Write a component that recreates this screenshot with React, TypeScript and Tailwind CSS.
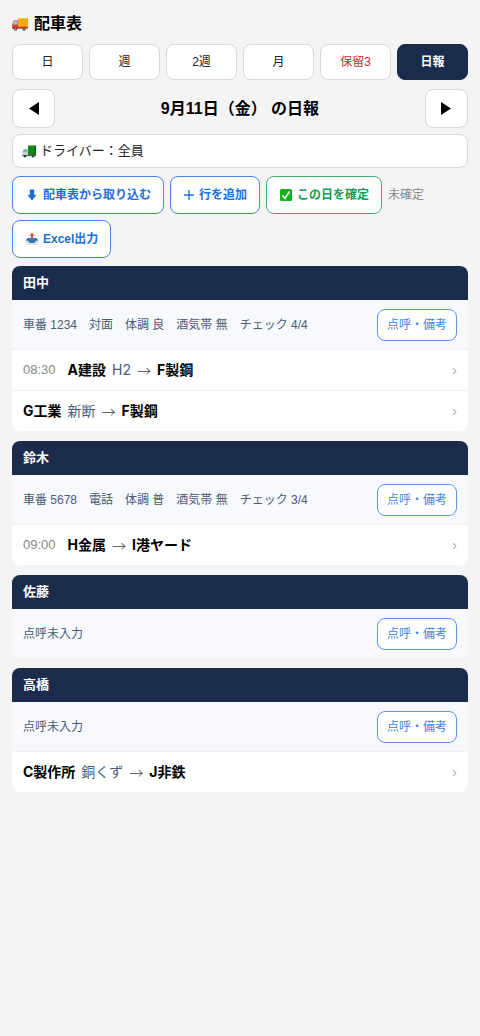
import type { ReactNode } from "react";

type Trip = { time?: string; from: string; item?: string; to: string };

type Driver = { name: string; rollCall: string; trips: Trip[] };

const tabs = [
  { label: "日", style: "border-[#d9d9d9] bg-white text-[#222]" },
  { label: "週", style: "border-[#d9d9d9] bg-white text-[#222]" },
  { label: "2週", style: "border-[#d9d9d9] bg-white text-[#222]" },
  { label: "月", style: "border-[#d9d9d9] bg-white text-[#222]" },
  { label: "保留3", style: "border-[#d9d9d9] bg-white text-[#c62f2f]" },
  { label: "日報", style: "border-[#1a2b4b] bg-[#1a2b4b] text-white font-bold" },
];

const drivers: Driver[] = [
  {
    name: "田中",
    rollCall: "車番 1234　対面　体調 良　酒気帯 無　チェック 4/4",
    trips: [
      { time: "08:30", from: "A建設", item: "H2", to: "F製鋼" },
      { from: "G工業", item: "新断", to: "F製鋼" },
    ],
  },
  {
    name: "鈴木",
    rollCall: "車番 5678　電話　体調 普　酒気帯 無　チェック 3/4",
    trips: [{ time: "09:00", from: "H金属", to: "I港ヤード" }],
  },
  { name: "佐藤", rollCall: "点呼未入力", trips: [] },
  {
    name: "高橋",
    rollCall: "点呼未入力",
    trips: [{ from: "C製作所", item: "銅くず", to: "J非鉄" }],
  },
];

export default function App() {
  return (
    <div className="min-h-screen bg-[#f4f4f4] px-3 pt-3 pb-6 text-black font-['Liberation_Sans','Noto_Sans_CJK_JP',sans-serif]">
      <h1 className="flex items-center gap-1.5 text-base leading-6 font-bold">
        <DeliveryTruck />
        配車表
      </h1>

      <nav className="mt-2 grid grid-cols-6 gap-1.5">
        {tabs.map((tab) => (
          <button key={tab.label} type="button" className={`h-9 rounded-lg border text-xs ${tab.style}`}>
            {tab.label}
          </button>
        ))}
      </nav>

      <div className="mt-[9px] flex items-center justify-between">
        <DayButton label="前の日">
          <path d="M11 0v13L1 6.500z" />
        </DayButton>
        <h2 className="text-base font-bold">9月11日（金） の日報</h2>
        <DayButton label="次の日">
          <path d="M1 0v13l10-6.500z" />
        </DayButton>
      </div>

      <div className="mt-1.5 flex h-[34px] items-center rounded-lg border border-[#d9d9d9] bg-white pl-[9px]">
        <GreenTruck />
        <select
          aria-label="ドライバー"
          className="h-full min-w-0 flex-1 appearance-none bg-transparent pl-1 text-[13px] text-[#222] outline-none"
        >
          <option>ドライバー：全員</option>
        </select>
      </div>

      <div className="mt-2 flex flex-wrap items-center gap-1.5">
        <ActionButton tone="border-[#4387e3] text-[#1d6fdc]">
          <svg viewBox="0 0 14 14" className="w-3.5 h-3.5" fill="currentColor">
            <path d="M4.800 1.500h4.400v5.500h2.300L7 12.500 2.500 7h2.300z" />
          </svg>
          配車表から取り込む
        </ActionButton>
        <ActionButton tone="border-[#4387e3] text-[#1d6fdc]">
          <svg viewBox="0 0 12 14" className="w-3 h-3.5" stroke="currentColor" strokeWidth="1.300">
            <path d="M6 2v10M1 7h10" />
          </svg>
          行を追加
        </ActionButton>
        <ActionButton tone="border-[#3fae74] text-[#169a55]">
          <svg viewBox="0 0 14 14" className="w-3.5 h-3.5">
            <rect x="1" y="1" width="12" height="12" rx="1.500" fill="#10b21c" />
            <path d="M3.500 7.500l2.500 3 4.500-7" fill="none" stroke="#fff" strokeWidth="1.500" />
          </svg>
          この日を確定
        </ActionButton>
        <span className="text-xs text-[#888]">未確定</span>
        <ActionButton tone="border-[#4387e3] text-[#1d6fdc]">
          <OutboxTray />
          Excel出力
        </ActionButton>
      </div>

      <main className="mt-2 space-y-2.5">
        {drivers.map((driver) => (
          <DriverCard key={driver.name} driver={driver} />
        ))}
      </main>
    </div>
  );
}

function DriverCard({ driver }: { driver: Driver }) {
  return (
    <section className="overflow-hidden rounded-lg bg-white">
      <h3 className="flex h-[34px] items-center bg-[#1a2b4b] px-[11px] text-[13px] font-bold text-white">
        {driver.name}
      </h3>
      <div className="flex h-[49px] items-center justify-between bg-[#f7f9fd] px-[11px]">
        <p className="text-xs text-[#4b5a75]">{driver.rollCall}</p>
        <button
          type="button"
          className="h-8 shrink-0 rounded-lg border border-[#5a96ea] bg-white px-[9px] text-xs text-[#4387e3]"
        >
          点呼・備考
        </button>
      </div>
      {driver.trips.map((trip) => (
        <TripRow key={trip.from} trip={trip} />
      ))}
    </section>
  );
}

function TripRow({ trip }: { trip: Trip }) {
  return (
    <a href="#" className="flex h-[41px] items-center border-t border-[#f0f0f0] px-[11px] text-sm">
      {trip.time && <time className="mr-3 text-[13px] text-[#888]">{trip.time}</time>}
      <span className="flex gap-1.5 font-['Inter','Noto_Sans_CJK_JP',sans-serif]">
        <b>{trip.from}</b>
        {trip.item && <span className="text-[#4b5a75]">{trip.item}</span>}
        <span className="text-[#444] font-['Noto_Sans_CJK_JP',sans-serif] font-light">→</span>
        <b>{trip.to}</b>
      </span>
      <span className="ml-auto text-[#aaa]">›</span>
    </a>
  );
}

function DayButton({ label, children }: { label: string; children: ReactNode }) {
  return (
    <button
      type="button"
      aria-label={label}
      className="flex h-[39px] w-[43px] items-center justify-center rounded-lg border border-[#d9d9d9] bg-white"
    >
      <svg viewBox="0 0 12 13" className="w-3 h-[13px]">
        {children}
      </svg>
    </button>
  );
}

function ActionButton({ tone, children }: { tone: string; children: ReactNode }) {
  return (
    <button
      type="button"
      className={`flex h-[38px] items-center gap-1 rounded-lg border bg-white px-3 text-xs font-bold ${tone}`}
    >
      {children}
    </button>
  );
}

function DeliveryTruck() {
  return (
    <svg viewBox="0 0 16 16" className="w-4 h-4">
      <path d="M6 2h10v9.500H6z" fill="#f5a80f" />
      <path d="M6 2h10v1H6z" fill="#fbc33b" />
      <path d="M1.800 4.500H6v8H.2V8.500z" fill="#d9412b" />
      <path d="M2.200 5.200h3.300V8.500H1z" fill="#8fd0e8" />
      <path d="M.2 10.800H16v1.800H.2z" fill="#c9331f" />
      <circle cx="3.500" cy="13" r="1.700" fill="#444" />
      <circle cx="12" cy="13" r="1.700" fill="#444" />
      <circle cx="3.500" cy="13" r=".7" fill="#ccc" />
      <circle cx="12" cy="13" r=".7" fill="#ccc" />
    </svg>
  );
}

function GreenTruck() {
  return (
    <svg viewBox="0 0 14 14" className="w-3.5 h-3.5">
      <path d="M6 1.500h8V12H6z" fill="#16851b" />
      <path d="M12.800 1.500H14V12h-1.200z" fill="#0b5f12" />
      <path d="M1.800 5H6v7H.3V8z" fill="#c5d3cf" />
      <path d="M2 5.600h3v2.300H1z" fill="#69aebd" />
      <path d="M.3 11H14v1.200H.3z" fill="#666" />
      <circle cx="3" cy="12.300" r="1.200" fill="#333" />
      <circle cx="11" cy="12.300" r="1.200" fill="#333" />
    </svg>
  );
}

function OutboxTray() {
  return (
    <svg viewBox="0 0 14 14" className="w-3.5 h-3.5">
      <path d="M1.500 7h11l1.200 1.500V13H.3V8.500z" fill="#e4e7ea" />
      <path d="M2.500 6h9l2 2.200-2.500.6-1.500 2.200h-5L3 8.800.5 8.200z" fill="#3478ad" />
      <path d="M7 .6l2.600 2.800H8v3.200H6V3.400H4.400z" fill="#e34b42" />
    </svg>
  );
}
